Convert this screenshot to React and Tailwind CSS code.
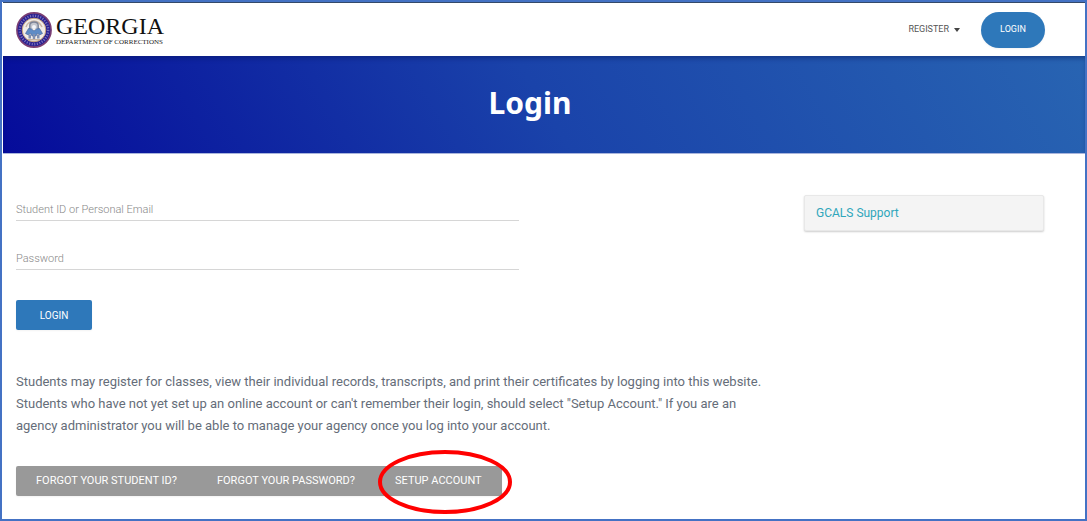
const roboto = "font-['Roboto','Liberation_Sans',sans-serif]";

function Seal() {
  return (
    <svg className="size-9 shrink-0" viewBox="0 0 36 36" aria-hidden="true">
      <circle cx="18" cy="18" r="17.1" fill="#2a2190" stroke="#7b3f73" strokeWidth="1.6" />
      <circle cx="18" cy="18" r="14.2" fill="none" stroke="#7c72bd" strokeWidth="2.4" strokeDasharray="1.1 1.5" />
      <circle cx="18" cy="18" r="11.8" fill="#f1ece8" stroke="#c7a47c" strokeWidth="1" />
      <path d="M10 15c1-4 5-6 8-6s6 2 8 6" fill="none" stroke="#cbb6a4" strokeWidth="1.4" />
      <path d="M13.8 17v-3.5c0-4.6 8.4-4.6 8.4 0V17" fill="#c3c6cf" stroke="#7b8396" strokeWidth="1.4" />
      <path d="M9.5 21.5l3-5 3 .5 2.5 2 2.5-2 3-.5 3 5-3 1.5-2-2-1.5 3h-4l-1.5-3-2 2z" fill="#5f8cc6" stroke="#3f6199" strokeWidth=".6" />
      <path d="M12.5 22.5H15v4h-2.5zM16.800 22h2.4v5h-2.4zM21 22.500h2.5v4H21z" fill="#8190b0" />
      <path d="M12 27.8h12" stroke="#b49a80" strokeWidth="1" />
      <circle cx="18" cy="15" r="2" fill="#f3f5f9" />
    </svg>
  );
}

function Field({ id, label, type }) {
  return (
    <div className="grid items-end border-b border-[#d6d6d6]">
      <input
        id={id}
        type={type}
        placeholder=" "
        className="peer col-start-1 row-start-1 h-6 w-full bg-transparent text-[11px] text-[#555555] outline-none"
      />
      <label
        htmlFor={id}
        className="invisible col-start-1 row-start-1 pb-0.5 text-[11px] leading-4 font-light text-[#888888] peer-placeholder-shown:visible"
      >
        {label}
      </label>
    </div>
  );
}

export default function App() {
  return (
    <div className={`${roboto} flex min-h-screen flex-col border-2 border-[#4472c4] bg-white pl-px text-[#3c4858]`}>
      <header className="flex h-[54px] items-center justify-between border-t border-[#34496a] pr-10 pl-[13px]">
        <a href="#home" className="flex items-center gap-1 font-['Liberation_Serif',serif] text-[#111111]">
          <Seal />
          <span className="flex flex-col">
            <span className="text-2xl leading-6">GEORGIA</span>
            <span className="text-[7px] leading-2 text-[#222222]">DEPARTMENT OF CORRECTIONS</span>
          </span>
        </a>
        <nav className="flex items-center gap-5">
          <button type="button" className="flex items-center gap-1 text-[9px] text-[#555555]">
            REGISTER
            <svg className="h-1 w-2" viewBox="0 0 8 4" aria-hidden="true">
              <path d="M1 0h6L4 4z" fill="#444444" />
            </svg>
          </button>
          <a href="#login" className="flex h-9 w-16 items-center justify-center rounded-full bg-[#2e78ba] text-[9px] text-white shadow-xs">
            LOGIN
          </a>
        </nav>
      </header>

      <div className="flex h-[98px] items-center justify-center border-b border-[#a9b5dc] bg-linear-[60deg,#050b9a_0%,#1a43aa_50%,#2864b2_100%] pr-7 pb-1 shadow-[inset_0_4px_5px_-2px_#06175a80]">
        <h1 className="font-['Noto_Sans','Open_Sans',sans-serif] text-3xl font-bold text-white">Login</h1>
      </div>

      <main className="flex items-start gap-7 pt-[41px] pr-[41px] pl-[13px]">
        <div className="min-w-0 flex-1">
          <form className="flex max-w-[503px] flex-col gap-6 pt-px">
            <Field id="student" label="Student ID or Personal Email" type="text" />
            <Field id="password" label="Password" type="password" />
            <button type="submit" className="mt-1.5 h-[30px] w-[76px] rounded-xs bg-[#2e78ba] text-[10px] text-white shadow-xs">
              LOGIN
            </button>
          </form>

          <p className="mt-[41px] max-w-[750px] text-[13px] leading-[22px] text-[#656d79]">
            Students may register for classes, view their individual records, transcripts, and print their certificates by logging into this website. Students who have not yet set up an online account or can't remember their login, should select "Setup Account." If you are an agency administrator you will be able to manage your agency once you log into your account.
          </p>

          <div className="mt-[29px] inline-flex h-[30px] rounded-xs bg-[#999999] text-[11px] text-white shadow-xs">
            <a href="#student-id" className="flex items-center px-5">FORGOT YOUR STUDENT ID?</a>
            <a href="#password-help" className="flex items-center px-5">FORGOT YOUR PASSWORD?</a>
            <a href="#setup" className="relative flex items-center px-5">
              SETUP ACCOUNT
              <svg className="pointer-events-none absolute -top-4 -right-2.5 h-16 w-[134px]" viewBox="0 0 134 64" aria-hidden="true">
                <ellipse cx="67" cy="32" rx="65" ry="30" fill="none" stroke="#ff0000" strokeWidth="4" />
              </svg>
            </a>
          </div>
        </div>

        <aside className="flex h-9 w-60 shrink-0 items-center rounded-xs border border-[#e8e8e8] bg-[#f4f4f4] px-[11px] text-xs shadow-[0_1px_2px_#00000033]">
          <a href="#support" className="text-[#2fa6bb]">GCALS Support</a>
        </aside>
      </main>
    </div>
  );
}
